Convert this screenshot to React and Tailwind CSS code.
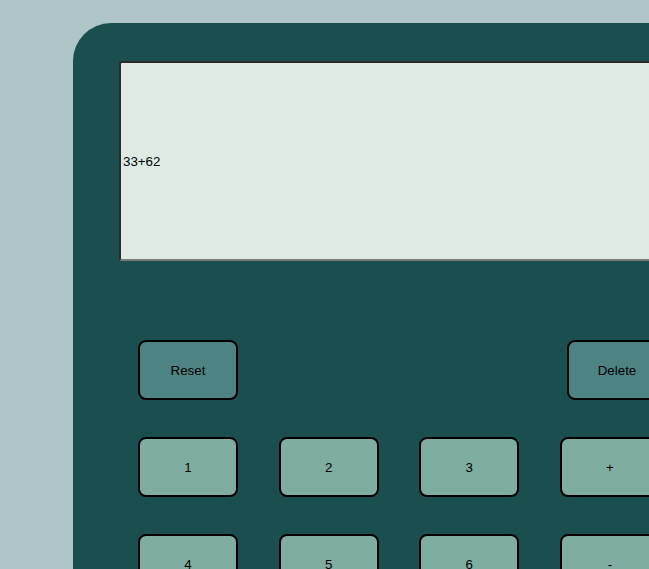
export default function App() {
  const btn = "w-[100px] h-[60px] shrink-0 border-2 border-black rounded-[8px] flex items-center justify-center pt-[2px] text-[13.33px] text-black";
  const num = btn + " bg-[#7fada2]";
  const sp = btn + " bg-[#4e8384]";
  return (
    <div className="w-[649px] h-[569px] overflow-hidden bg-[#b0c5c8] pl-[73px] pt-[23px] font-['Liberation_Sans',Arial,sans-serif]">
      <div className="w-[700px] h-[700px] bg-[#1b4f4f] rounded-tl-[38px] pl-[46px] pt-[38px]">
        <div className="w-[600px] h-[200px] bg-[#deebe5] border-2 border-t-[#2b2b2b] border-l-[#2b2b2b] border-b-[#7a7a7a] border-r-[#7a7a7a] rounded-[3px] flex items-center pl-[2px] pt-[2px] text-[13.33px] text-black">
          33+62
        </div>
        <div className="pl-[19px] pt-[79px] flex flex-col gap-[37px]">
          <div className="flex">
            <div className={sp}>Reset</div>
            <div className={sp + " ml-[329px]"}>Delete</div>
          </div>
          <div className="flex gap-[40.67px]">
            <div className={num}>1</div>
            <div className={num}>2</div>
            <div className={num}>3</div>
            <div className={num}>+</div>
          </div>
          <div className="flex gap-[40.67px]">
            <div className={num}>4</div>
            <div className={num}>5</div>
            <div className={num}>6</div>
            <div className={num}>-</div>
          </div>
        </div>
      </div>
    </div>
  );
}
